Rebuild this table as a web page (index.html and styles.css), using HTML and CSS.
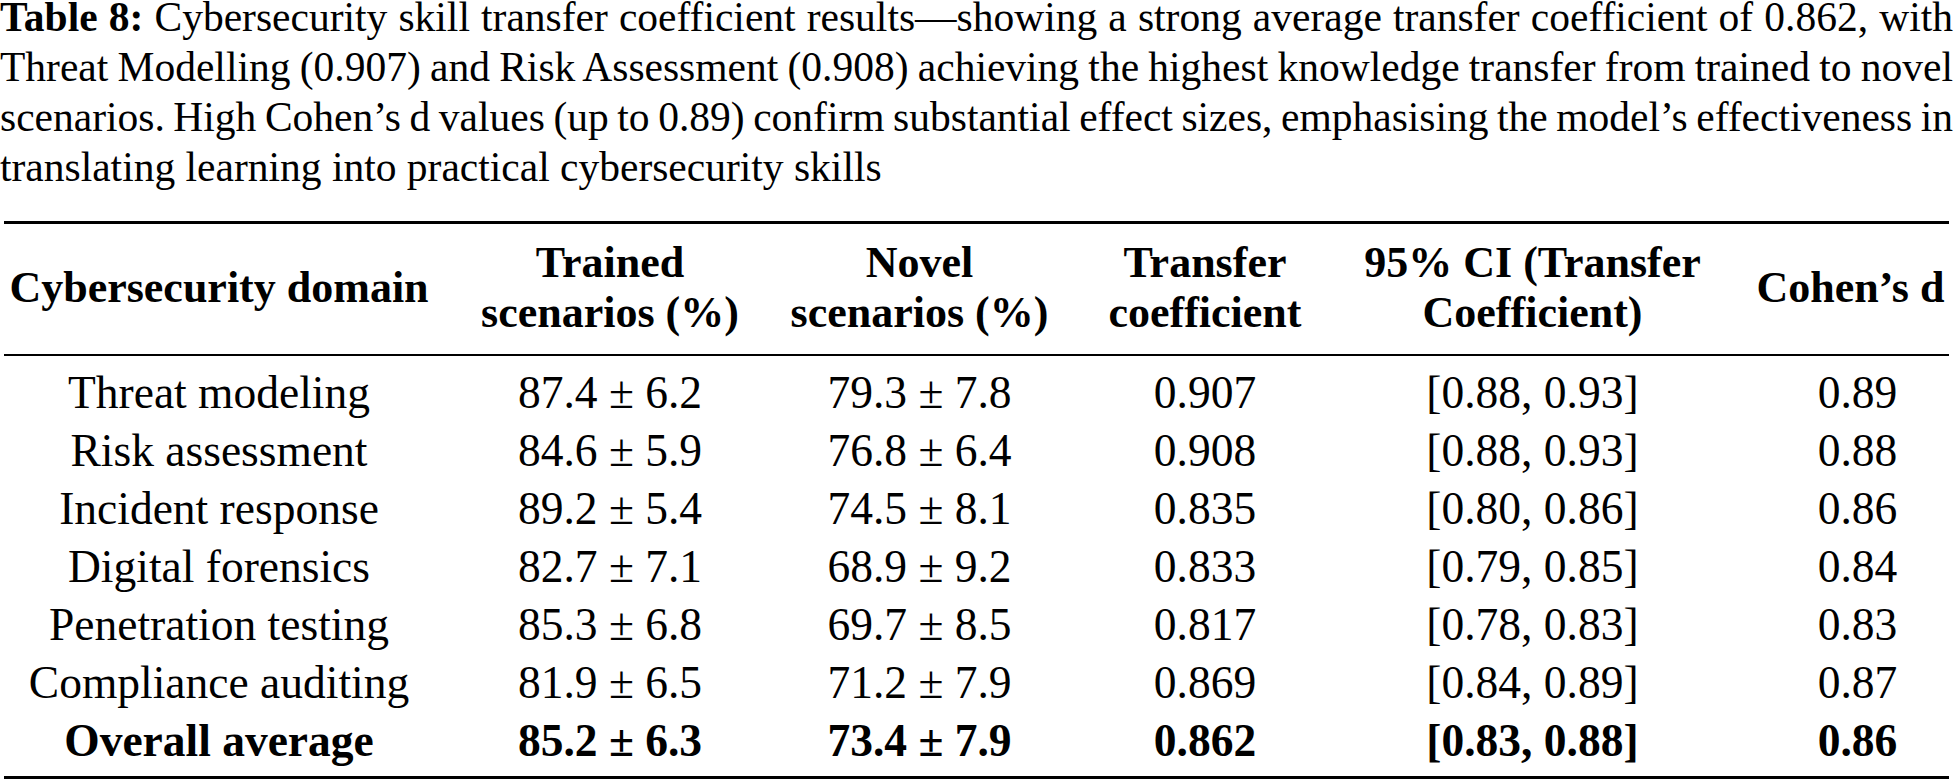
FILE: index.html
```html
<!DOCTYPE html>
<html lang="en">
<head>
<meta charset="utf-8">
<title>Table 8 – Cybersecurity skill transfer coefficient results</title>
<link rel="stylesheet" href="styles.css">
</head>
<body>
<figure class="table-figure">
  <figcaption class="caption">
    <span class="cap-line"><strong class="cap-label">Table 8:</strong> Cybersecurity skill transfer coefficient results—showing a strong average transfer coefficient of 0.862, with</span>
    <span class="cap-line">Threat Modelling (0.907) and Risk Assessment (0.908) achieving the highest knowledge transfer from trained to novel</span>
    <span class="cap-line">scenarios. High Cohen’s d values (up to 0.89) confirm substantial effect sizes, emphasising the model’s effectiveness in</span>
    <span class="cap-line cap-last">translating learning into practical cybersecurity skills</span>
  </figcaption>
  <table class="results">
    <colgroup>
      <col class="w-domain">
      <col class="w-trained">
      <col class="w-novel">
      <col class="w-coef">
      <col class="w-ci">
      <col class="w-d">
    </colgroup>
    <thead>
      <tr>
        <th class="first">Cybersecurity domain</th>
        <th>Trained<br>scenarios (%)</th>
        <th>Novel<br>scenarios (%)</th>
        <th>Transfer<br>coefficient</th>
        <th>95% CI (Transfer<br>Coefficient)</th>
        <th class="last">Cohen’s d</th>
      </tr>
    </thead>
    <tbody>
      <tr>
        <td class="first">Threat modeling</td>
        <td>87.4 ± 6.2</td>
        <td>79.3 ± 7.8</td>
        <td>0.907</td>
        <td>[0.88, 0.93]</td>
        <td class="last">0.89</td>
      </tr>
      <tr>
        <td class="first">Risk assessment</td>
        <td>84.6 ± 5.9</td>
        <td>76.8 ± 6.4</td>
        <td>0.908</td>
        <td>[0.88, 0.93]</td>
        <td class="last">0.88</td>
      </tr>
      <tr>
        <td class="first">Incident response</td>
        <td>89.2 ± 5.4</td>
        <td>74.5 ± 8.1</td>
        <td>0.835</td>
        <td>[0.80, 0.86]</td>
        <td class="last">0.86</td>
      </tr>
      <tr>
        <td class="first">Digital forensics</td>
        <td>82.7 ± 7.1</td>
        <td>68.9 ± 9.2</td>
        <td>0.833</td>
        <td>[0.79, 0.85]</td>
        <td class="last">0.84</td>
      </tr>
      <tr>
        <td class="first">Penetration testing</td>
        <td>85.3 ± 6.8</td>
        <td>69.7 ± 8.5</td>
        <td>0.817</td>
        <td>[0.78, 0.83]</td>
        <td class="last">0.83</td>
      </tr>
      <tr>
        <td class="first">Compliance auditing</td>
        <td>81.9 ± 6.5</td>
        <td>71.2 ± 7.9</td>
        <td>0.869</td>
        <td>[0.84, 0.89]</td>
        <td class="last">0.87</td>
      </tr>
      <tr class="total">
        <td class="first">Overall average</td>
        <td>85.2 ± 6.3</td>
        <td>73.4 ± 7.9</td>
        <td>0.862</td>
        <td>[0.83, 0.88]</td>
        <td class="last">0.86</td>
      </tr>
    </tbody>
  </table>
</figure>
</body>
</html>
```

FILE: styles.css
```css
html, body {
  margin: 0;
  padding: 0;
  background: #ffffff;
}

body {
  width: 1953px;
  height: 779px;
  overflow: hidden;
  font-family: "Liberation Serif", "Times New Roman", serif;
  color: #000000;
}

.table-figure {
  margin: 0;
  padding: 0;
}

/* ---------- caption ---------- */
.caption {
  display: block;
  margin: -8px 0 29px 0;
  font-size: 41.5px;
  line-height: 50px;
}

.cap-line {
  display: block;
  text-align: justify;
  text-align-last: justify;
  word-spacing: -3px;
}

.cap-line.cap-last {
  text-align: left;
  text-align-last: left;
  word-spacing: normal;
}

.cap-label {
  font-weight: bold;
}

/* ---------- table ---------- */
.results {
  width: 1945px;
  margin-left: 4px;
  border-collapse: collapse;
  table-layout: fixed;
}

.w-domain  { width: 452px; }
.w-trained { width: 308px; }
.w-novel   { width: 311px; }
.w-coef    { width: 260px; }
.w-ci      { width: 395px; }
.w-d       { width: 219px; }

.results th,
.results td {
  padding: 0;
  text-align: center;
  white-space: nowrap;
}

.results thead tr {
  border-top: 3px solid #000;
  border-bottom: 2px solid #000;
}

.results th {
  font-size: 44px;
  line-height: 50px;
  font-weight: bold;
  vertical-align: middle;
  padding-top: 14px;
  padding-bottom: 16px;
}

.results td {
  font-size: 45.5px;
  line-height: 58px;
  font-weight: normal;
  vertical-align: top;
}

.results .first {
  padding-left: 2px;
  padding-right: 24px;
}

.results th.last {
  padding-left: 24px;
  padding-right: 2px;
}

.results td.last {
  padding-left: 38px;
  padding-right: 2px;
}

.results tbody tr:first-child td {
  padding-top: 8px;
}

.results tbody tr:last-child td {
  padding-bottom: 6px;
}

.results tbody tr:last-child {
  border-bottom: 3px solid #000;
}

.results tr.total td {
  font-weight: bold;
}
```
